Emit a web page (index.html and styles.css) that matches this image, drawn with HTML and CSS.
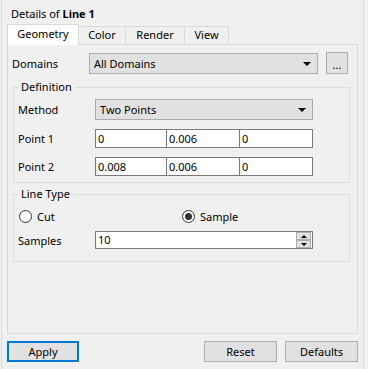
FILE: index.html
```html
<!DOCTYPE html>
<html lang="en">
<head>
    <meta charset="UTF-8">
    <title>Details of Line 1</title>
    <link rel="stylesheet" href="styles.css">
</head>
<body>
    <div class="frame">
        <div class="title">Details of <b>Line 1</b></div>

        <!-- Tab bar -->
        <div class="tabs">
            <div class="tab tab-geometry active">Geometry</div>
            <div class="tab tab-color">Color</div>
            <div class="tab tab-render">Render</div>
            <div class="tab tab-view">View</div>
        </div>

        <div class="pane">
            <div class="domains-row">
                <label>Domains</label>
                <div class="combo">All Domains<span class="arrow"></span></div>
                <button class="dots">...</button>
            </div>

            <fieldset class="group group-definition">
                <legend>Definition</legend>
                <div class="field field-method">
                    <label>Method</label>
                    <div class="combo">Two Points<span class="arrow"></span></div>
                </div>
                <div class="field field-point">
                    <label>Point 1</label>
                    <div class="triple">
                        <input type="text" value="0">
                        <input type="text" value="0.006">
                        <input type="text" value="0">
                    </div>
                </div>
                <div class="field field-point">
                    <label>Point 2</label>
                    <div class="triple">
                        <input type="text" value="0.008">
                        <input type="text" value="0.006">
                        <input type="text" value="0">
                    </div>
                </div>
            </fieldset>

            <fieldset class="group group-linetype">
                <legend>Line Type</legend>
                <div class="radios">
                    <div class="radio"><span class="dot"></span>Cut</div>
                    <div class="radio checked"><span class="dot"></span>Sample</div>
                </div>
                <div class="field field-samples">
                    <label>Samples</label>
                    <div class="spin">
                        <span class="spin-value">10</span>
                        <span class="spin-buttons">
                            <span class="spin-up"></span>
                            <span class="spin-down"></span>
                        </span>
                    </div>
                </div>
            </fieldset>
        </div>

        <!-- Bottom buttons -->
        <div class="buttons">
            <button class="btn btn-apply">Apply</button>
            <button class="btn btn-reset">Reset</button>
            <button class="btn">Defaults</button>
        </div>
    </div>
</body>
</html>
```

FILE: styles.css
```css
/* Global styles */
html, body {
    margin: 0;
    height: 100%;
}

body {
    background: #f0f0f0;
    font-family: 'Noto Sans', 'Liberation Sans', sans-serif;
    font-size: 11px;
    color: #000;
}

/* Outer frame */
.frame {
    box-sizing: border-box;
    margin-left: 1px;
    width: 363px;
    height: 369px;
    border-left: 1px solid #dcdcdc;
    border-right: 1px solid #dcdcdc;
    padding: 0 5px;
}

.title {
    box-sizing: border-box;
    height: 24px;
    padding: 6px 0 0 4px;
    line-height: 16px;
}

/* Tabs */
.tabs {
    display: flex;
    align-items: flex-end;
    height: 20px;
}

.tab {
    box-sizing: border-box;
    height: 18px;
    line-height: 16px;
    text-align: center;
    border: 1px solid #d9d9d9;
    border-bottom: none;
    background: #f0f0f0;
    margin-left: -1px;
}

.tab-geometry {
    margin-left: 0;
    width: 72px;
}

.tab-color {
    width: 48px;
}

.tab-render {
    width: 60px;
}

.tab-view {
    width: 45px;
}

.tab.active {
    height: 21px;
    margin-bottom: -1px;
    padding-top: 1px;
    background: #fff;
    position: relative;
    z-index: 1;
}

.pane {
    box-sizing: border-box;
    width: 351px;
    height: 290px;
    border: 1px solid #d9d9d9;
    padding: 7px 0 0 4px;
}

/* Domains row */
.domains-row {
    display: grid;
    grid-template-columns: 69px 229px 22px;
    column-gap: 8px;
    height: 22px;
    align-items: center;
}

.combo {
    box-sizing: border-box;
    position: relative;
    height: 21px;
    line-height: 19px;
    padding-left: 4px;
    background: #e1e1e1;
    border: 1px solid #adadad;
}

.arrow {
    position: absolute;
    right: 6px;
    top: 8px;
    width: 0;
    height: 0;
    border-left: 4px solid transparent;
    border-right: 4px solid transparent;
    border-top: 4px solid #000;
}

button {
    font: inherit;
    color: #000;
    background: #e1e1e1;
    border: 1px solid #adadad;
    padding: 0;
    margin: 0;
}

.dots {
    height: 22px;
    line-height: 18px;
    padding-top: 3px;
}

/* Group boxes */
.group {
    box-sizing: border-box;
    width: 337px;
    margin: 5px 0 0 1px;
    padding: 4px 4px 6px 4px;
    border: 1px solid #dcdcdc;
    min-width: 0;
}

.group legend {
    padding: 0 3px;
    line-height: 16px;
}

.group-linetype {
    margin-top: 3px;
    padding: 6px 4px 12px 4px;
}

.field {
    display: grid;
    grid-template-columns: 77px 218px;
    align-items: center;
}

.field-point {
    margin-top: 9px;
}

.triple {
    display: grid;
    grid-template-columns: 72px 73px 73px;
}

.triple input {
    box-sizing: border-box;
    width: 100%;
    height: 19px;
    margin: 0;
    padding: 0 0 0 2px;
    font: inherit;
    color: #000;
    background: #fff;
    border: 1px solid #7a7a7a;
    outline: none;
}

.triple input + input {
    margin-left: -1px;
    width: calc(100% + 1px);
}

/* Radio buttons */
.radios {
    display: grid;
    grid-template-columns: 163px 163px;
    height: 16px;
    align-items: center;
}

.radio {
    display: flex;
    align-items: center;
    gap: 5px;
    padding-left: 1px;
}

.dot {
    box-sizing: border-box;
    width: 13px;
    height: 13px;
    border: 1px solid #333;
    border-radius: 50%;
    background: #fff;
    display: flex;
    align-items: center;
    justify-content: center;
}

.radio.checked .dot::after {
    content: "";
    width: 7px;
    height: 7px;
    border-radius: 50%;
    background: #333;
}

/* Spin box */
.field-samples {
    margin-top: 7px;
}

.spin {
    box-sizing: border-box;
    height: 18px;
    display: flex;
    background: #fff;
    border: 1px solid #7a7a7a;
}

.spin-value {
    flex: 1;
    padding-left: 2px;
    line-height: 16px;
}

.spin-buttons {
    display: flex;
    flex-direction: column;
    width: 15px;
    margin: 0 1px 0 0;
}

.spin-up, .spin-down {
    flex: 1;
    background: #e1e1e1;
    border: 1px solid #adadad;
    display: flex;
    align-items: center;
    justify-content: center;
}

.spin-up::after {
    content: "";
    border-left: 3px solid transparent;
    border-right: 3px solid transparent;
    border-bottom: 3px solid #000;
}

.spin-down::after {
    content: "";
    border-left: 3px solid transparent;
    border-right: 3px solid transparent;
    border-top: 3px solid #000;
}

/* Bottom buttons */
.buttons {
    display: flex;
    gap: 8px;
    margin-top: 7px;
    width: 351px;
}

.btn {
    box-sizing: border-box;
    width: 73px;
    height: 21px;
}

.btn-apply {
    width: 72px;
    border: 2px solid #0078d7;
}

.btn-reset {
    margin-left: auto;
}
```
